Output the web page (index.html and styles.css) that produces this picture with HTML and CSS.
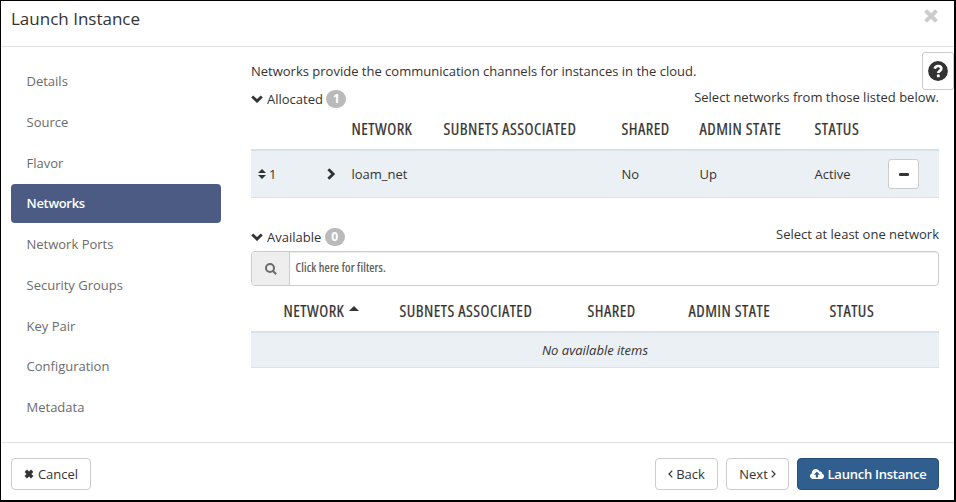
FILE: index.html
```
<!DOCTYPE html>
<html lang="en">
<head>
<meta charset="utf-8">
<title>Launch Instance</title>
<link rel="stylesheet" href="styles.css">
</head>
<body>
<div class="modal">
  <header class="modal-header">
    <h1>Launch Instance</h1>
    <svg class="close" viewBox="0 0 14 14"><path d="M3 3L11 11M11 3L3 11"/></svg>
  </header>
  <div class="modal-body">
    <nav class="steps">
      <a>Details</a><a>Source</a><a>Flavor</a><a class="active">Networks</a><a>Network Ports</a><a>Security Groups</a><a>Key Pair</a><a>Configuration</a><a>Metadata</a>
    </nav>
    <main class="content">
      <p class="intro">Networks provide the communication channels for instances in the cloud.</p>
      <section class="allocated">
        <div class="section-head">
          <div class="toggle"><svg class="chev" viewBox="0 0 12 8"><path d="M1.2 1.4L6 6.1L10.8 1.4"/></svg><span>Allocated</span><b class="badge">1</b></div>
          <span class="hint">Select networks from those listed below.</span>
        </div>
        <div class="row head">
          <span></span><span></span><span class="th">NETWORK</span><span class="th">SUBNETS ASSOCIATED</span><span class="th">SHARED</span><span class="th">ADMIN STATE</span><span class="th">STATUS</span><span></span>
        </div>
        <div class="row data">
          <span class="order"><svg class="sort" viewBox="0 0 8 10"><path d="M0 4L4 0L8 4ZM0 6H8L4 10Z"/></svg>1</span>
          <svg class="expand" viewBox="0 0 8 12"><path d="M1.4 1.2L6.2 6L1.4 10.8"/></svg>
          <span>loam_net</span><span></span><span>No</span><span>Up</span><span>Active</span>
          <button class="remove"><svg viewBox="0 0 10 3"><rect width="10" height="3" rx="1"/></svg></button>
        </div>
      </section>
      <section class="available">
        <div class="section-head">
          <div class="toggle"><svg class="chev" viewBox="0 0 12 8"><path d="M1.2 1.4L6 6.1L10.8 1.4"/></svg><span>Available</span><b class="badge">0</b></div>
          <span class="hint">Select at least one network</span>
        </div>
        <div class="filter">
          <div class="addon"><svg viewBox="0 0 12 12"><circle cx="5" cy="5" r="4"/><path d="M8 8L11.2 11.2"/></svg></div>
          <div class="field"><span class="placeholder">Click here for filters.</span></div>
        </div>
        <div class="row head">
          <span></span><span class="th">NETWORK</span><svg class="asc" viewBox="0 0 10 5"><path d="M0 5L5 0L10 5Z"/></svg><span class="th">SUBNETS ASSOCIATED</span><span class="th">SHARED</span><span class="th">ADMIN STATE</span><span class="th">STATUS</span>
        </div>
        <div class="empty">No available items</div>
      </section>
    </main>
    <button class="help"><svg viewBox="0 0 20 20"><circle cx="10" cy="10" r="9.9"/><path d="M6.7 7.6C7.2 5.9 8.4 5 10.1 5C12 5 13.3 6 13.3 7.7C13.3 9.8 10.3 9.9 10.3 12"/><rect x="8.9" y="13.5" width="2.8" height="2.7"/></svg></button>
  </div>
  <footer class="modal-footer">
    <button class="btn cancel"><svg class="x" viewBox="0 0 10 10"><path d="M1.8 1.8L8.2 8.2M8.2 1.8L1.8 8.2"/></svg>Cancel</button>
    <div class="actions">
      <button class="btn back"><svg class="angle" viewBox="0 0 5 8"><path d="M4.3 .7L1 4L4.3 7.3"/></svg>Back</button>
      <button class="btn next">Next<svg class="angle" viewBox="0 0 5 8"><path d="M.7 .7L4 4L.7 7.3"/></svg></button>
      <button class="btn launch"><svg class="cloud" viewBox="0 0 14 10"><path class="puff" d="M3 10C1.3 10 0 8.7 0 7.1C0 5.9 .7 4.9 1.8 4.4C1.7 1.9 3.5 0 5.8 0C7.5 0 8.9 1 9.5 2.5C11 2 12.3 3.1 12.1 4.6C13.2 5 14 6 14 7.2C14 8.8 12.8 10 11.2 10Z"/><path class="arrow" d="M6.9 2.6L10 5.8H8V8.5H5.8V5.8H3.8Z"/></svg>Launch Instance</button>
    </div>
  </footer>
</div>
</body>
</html>
```
FILE: styles.css
```
* { box-sizing: border-box; }
body {
  margin: 0;
  background: #fff;
  color: #333;
  font: 13px/18px "Open Sans", sans-serif;
}
svg { display: block; flex: none; fill: #333; }
button { font: inherit; color: inherit; margin: 0; }
.modal {
  width: 956px;
  height: 502px;
  border: solid #000;
  border-width: 1px 2px 2px 1px;
  display: flex;
  flex-direction: column;
}
.modal-header {
  height: 46px;
  flex: none;
  border-bottom: 1px solid #e0e0e0;
  padding: 6px 16px 0 10px;
  display: flex;
  justify-content: space-between;
}
h1 { margin: 0; font-size: 17px; line-height: 24px; font-weight: 400; }
.close { width: 14px; height: 14px; margin-top: 2px; }
.close path { fill: none; stroke: #ccc; stroke-width: 4; stroke-linecap: square; }
.modal-body { flex: 1; display: flex; position: relative; }
.steps { width: 210px; margin: 15px 30px 0 10px; display: flex; flex-direction: column; gap: 1.75px; }
.steps a { height: 39px; line-height: 38px; padding-left: 15.5px; color: #6c6c6c; border-radius: 4px; }
.steps .active { background: #4b5b84; color: #fff; font-weight: 600; letter-spacing: -.3px; }
.content { width: 688px; }
.intro { margin: 15px 0 0; }
.section-head { display: flex; justify-content: space-between; height: 29px; }
.toggle { display: flex; align-items: center; height: 18px; margin-top: 10px; }
.chev { width: 12px; height: 8px; margin-right: 4px; }
.chev path, .expand path { fill: none; stroke: #333; stroke-width: 2.8; }
.badge { background: #bababa; color: #fff; border-radius: 9px; height: 18px; min-width: 20px; padding: 0 6.5px; margin-left: 3.5px; font-size: 12px; line-height: 17px; text-align: center; }
.hint { margin-top: 8px; }
.row { display: grid; align-items: center; }
.allocated .row { grid-template-columns: 76px 24.5px 92px 178px 78px 115px 73.5px 31px; }
.allocated .head { height: 40px; }
.available .row { grid-template-columns: 32.5px 65.5px 50.5px 188px 101px 141px 90px; }
.available .head { height: 45px; padding-top: 5px; }
.th { font-size: 16.5px; line-height: 22px; font-stretch: 75%; font-weight: 500; letter-spacing: .47px; -webkit-text-stroke: .2px #333; white-space: nowrap; }
.data { height: 49px; background: #ebf0f4; border-top: 2px solid #d8e2ea; border-bottom: 1px solid #d8e2ea; }
.order { display: flex; align-items: center; padding-left: 7px; }
.sort { width: 8px; height: 10px; margin-right: 3px; }
.expand { width: 8px; height: 12px; }
.remove { width: 31px; height: 30px; padding: 0; border: 1px solid #ccc; border-radius: 3px; background: #fff; display: grid; place-items: center; }
.remove svg { width: 10px; height: 3px; }
.available { margin-top: 20px; }
.available .section-head { height: 33px; }
.available .hint { margin-top: 7px; }
.filter { display: flex; height: 35px; border: 1px solid #ccc; border-radius: 4px; overflow: hidden; }
.addon { width: 38px; background: #eee; border-right: 1px solid #ccc; display: grid; place-items: center; }
.addon svg { width: 12px; height: 12px; fill: none; stroke: #6c6c6c; stroke-width: 2; }
.field { flex: 1; padding: 7px 5.5px; box-shadow: inset 0 1px 1px rgba(0,0,0,.075); }
.placeholder { display: block; font-size: 12.5px; font-stretch: 75%; font-weight: 500; letter-spacing: .18px; -webkit-text-stroke: .2px #555; color: #555; white-space: nowrap; }
.asc { width: 10px; height: 5px; margin-top: -6px; }
.empty { height: 37px; background: #ebf0f4; border-top: 2px solid #d8e2ea; border-bottom: 1px solid #d8e2ea; text-align: center; line-height: 35px; font-style: italic; }
.help { position: absolute; right: 0; top: 5px; width: 32px; height: 38px; background: #fff; border: 1px solid #ccc; border-radius: 3px; padding: 0; display: grid; place-items: center; }
.help svg { width: 20px; height: 20px; }
.help path { fill: none; stroke: #fff; stroke-width: 2.7; }
.help rect { fill: #fff; }
.modal-footer { height: 58px; flex: none; border-top: 1px solid #e0e0e0; padding: 15px 15px 0 10px; display: flex; justify-content: space-between; }
.actions { display: flex; gap: 8px; }
.btn { height: 32px; padding: 0; border: 1px solid #ccc; border-radius: 4px; background: #fff; display: flex; align-items: center; justify-content: center; }
.cancel { width: 80px; gap: 4px; }
.back, .next { width: 63px; gap: 3px; }
.launch { width: 142px; gap: 4px; background: #305e8f; border-color: #285078; color: #fff; font-weight: 600; letter-spacing: -.25px; }
.x { width: 10px; height: 10px; }
.x path { fill: none; stroke: #333; stroke-width: 3.4; }
.angle { width: 5px; height: 8px; }
.angle path { fill: none; stroke: #333; stroke-width: 1.2; }
.cloud { width: 14px; height: 10px; }
.puff { fill: #fff; }
.arrow { fill: #305e8f; }
```
